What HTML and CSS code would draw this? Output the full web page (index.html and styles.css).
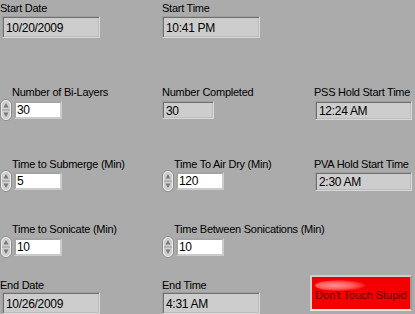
FILE: index.html
```html
<!DOCTYPE html>
<html>
<head>
<meta charset="utf-8">
<link rel="stylesheet" href="styles.css">
</head>
<body>
<div class="panel">
  <div class="row r1">
    <div class="cell c1">
      <div class="label">Start Date</div>
      <div class="ind wide">10/20/2009</div>
    </div>
    <div class="cell c2">
      <div class="label">Start Time</div>
      <div class="ind wide">10:41 PM</div>
    </div>
    <div class="cell c3"></div>
  </div>

  <div class="row r2">
    <div class="cell c1">
      <div class="label indent">Number of Bi-Layers</div>
      <div class="num">
        <svg class="spin" viewBox="0 0 12 22" width="12" height="22"><rect x="0.5" y="0.5" width="11" height="21" rx="5.5" fill="#cfcfcf" stroke="#8c8c8c"/><rect x="1.5" y="1.5" width="9" height="19" rx="4.5" fill="none" stroke="#ececec"/><line x1="2" y1="11" x2="10" y2="11" stroke="#9a9a9a"/><path d="M6 4 L8.5 8.5 L3.5 8.5 Z" fill="#7a7a7a"/><path d="M6 18 L8.5 13.5 L3.5 13.5 Z" fill="#7a7a7a"/></svg>
        <div class="ctl">30</div>
      </div>
    </div>
    <div class="cell c2">
      <div class="label">Number Completed</div>
      <div class="ind small">30</div>
    </div>
    <div class="cell c3">
      <div class="label lab3">PSS Hold Start Time</div>
      <div class="ind right">12:24 AM</div>
    </div>
  </div>

  <div class="row r3">
    <div class="cell c1">
      <div class="label indent">Time to Submerge (Min)</div>
      <div class="num">
        <svg class="spin" viewBox="0 0 12 22" width="12" height="22"><rect x="0.5" y="0.5" width="11" height="21" rx="5.5" fill="#cfcfcf" stroke="#8c8c8c"/><rect x="1.5" y="1.5" width="9" height="19" rx="4.5" fill="none" stroke="#ececec"/><line x1="2" y1="11" x2="10" y2="11" stroke="#9a9a9a"/><path d="M6 4 L8.5 8.5 L3.5 8.5 Z" fill="#7a7a7a"/><path d="M6 18 L8.5 13.5 L3.5 13.5 Z" fill="#7a7a7a"/></svg>
        <div class="ctl">5</div>
      </div>
    </div>
    <div class="cell c2">
      <div class="label indent">Time To Air Dry (Min)</div>
      <div class="num">
        <svg class="spin" viewBox="0 0 12 22" width="12" height="22"><rect x="0.5" y="0.5" width="11" height="21" rx="5.5" fill="#cfcfcf" stroke="#8c8c8c"/><rect x="1.5" y="1.5" width="9" height="19" rx="4.5" fill="none" stroke="#ececec"/><line x1="2" y1="11" x2="10" y2="11" stroke="#9a9a9a"/><path d="M6 4 L8.5 8.5 L3.5 8.5 Z" fill="#7a7a7a"/><path d="M6 18 L8.5 13.5 L3.5 13.5 Z" fill="#7a7a7a"/></svg>
        <div class="ctl">120</div>
      </div>
    </div>
    <div class="cell c3">
      <div class="label lab3">PVA Hold Start Time</div>
      <div class="ind right">2:30 AM</div>
    </div>
  </div>

  <div class="row r4">
    <div class="cell c1">
      <div class="label indent">Time to Sonicate (Min)</div>
      <div class="num">
        <svg class="spin" viewBox="0 0 12 22" width="12" height="22"><rect x="0.5" y="0.5" width="11" height="21" rx="5.5" fill="#cfcfcf" stroke="#8c8c8c"/><rect x="1.5" y="1.5" width="9" height="19" rx="4.5" fill="none" stroke="#ececec"/><line x1="2" y1="11" x2="10" y2="11" stroke="#9a9a9a"/><path d="M6 4 L8.5 8.5 L3.5 8.5 Z" fill="#7a7a7a"/><path d="M6 18 L8.5 13.5 L3.5 13.5 Z" fill="#7a7a7a"/></svg>
        <div class="ctl">10</div>
      </div>
    </div>
    <div class="cell c2">
      <div class="label indent">Time Between Sonications (Min)</div>
      <div class="num">
        <svg class="spin" viewBox="0 0 12 22" width="12" height="22"><rect x="0.5" y="0.5" width="11" height="21" rx="5.5" fill="#cfcfcf" stroke="#8c8c8c"/><rect x="1.5" y="1.5" width="9" height="19" rx="4.5" fill="none" stroke="#ececec"/><line x1="2" y1="11" x2="10" y2="11" stroke="#9a9a9a"/><path d="M6 4 L8.5 8.5 L3.5 8.5 Z" fill="#7a7a7a"/><path d="M6 18 L8.5 13.5 L3.5 13.5 Z" fill="#7a7a7a"/></svg>
        <div class="ctl">10</div>
      </div>
    </div>
    <div class="cell c3"></div>
  </div>

  <div class="row r5">
    <div class="cell c1">
      <div class="label">End Date</div>
      <div class="ind wide">10/26/2009</div>
    </div>
    <div class="cell c2">
      <div class="label">End Time</div>
      <div class="ind wide">4:31 AM</div>
    </div>
    <div class="cell c3">
      <div class="btn"><span class="shine"></span><span class="btn-text">Don't Touch Stupid</span></div>
    </div>
  </div>
</div>
</body>
</html>
```

FILE: styles.css
```css
html, body {
  margin: 0;
  padding: 0;
  background: #ababab;
  width: 415px;
  height: 314px;
  overflow: hidden;
}
.panel {
  display: flex;
  flex-direction: column;
  padding-top: 2px;
  font-family: "Liberation Sans", Arial, sans-serif;
  color: #000;
}
.row {
  display: flex;
}
.r1 { height: 84px; }
.r2 { height: 72px; }
.r3 { height: 65px; }
.r4 { height: 56px; }
.r5 { height: 40px; }
.cell {
  display: flex;
  flex-direction: column;
  align-items: flex-start;
}
.c1 { width: 162px; }
.c2 { width: 148px; }
.c3 { width: 105px; }
.label {
  font-size: 11px;
  line-height: 13px;
  height: 13px;
  letter-spacing: -0.25px;
  white-space: nowrap;
  margin-bottom: 1px;
}
.indent { padding-left: 12px; }
.lab3 { padding-left: 4px; }
.r2 .label { margin-bottom: 2px; }
.r4 .label { margin-bottom: 2px; }
.r5 .label { margin-bottom: 0; }

.ind {
  box-sizing: border-box;
  background: #cdcdcd;
  border: 1px solid;
  border-color: #9e9e9e #d8d8d8 #d8d8d8 #9e9e9e;
  box-shadow: inset 1px 1px 0 #6f6f6f, inset -1px -1px 0 #bdbdbd;
  font-size: 12px;
  line-height: 14px;
  letter-spacing: -0.3px;
  padding: 3px 4px 0 3px;
  white-space: nowrap;
}
.ind.wide {
  width: 98px;
  height: 22px;
  margin-left: 2px;
  padding-top: 4px;
}
.c2 .ind.wide { margin-left: 0; }
.ind.small {
  width: 52px;
  height: 18px;
  padding-top: 2px;
}
.ind.right {
  width: 97px;
  height: 19px;
  margin-left: 5px;
  padding-top: 2px;
}
.num {
  display: flex;
  align-items: center;
  margin-top: -2px;
}
.spin {
  display: block;
  flex: none;
}
.ctl {
  box-sizing: border-box;
  width: 48px;
  height: 18px;
  margin-left: 2px;
  background: #fff;
  border: 2px solid;
  border-color: #a4a4a4 #cbcbcb #cbcbcb #a4a4a4;
  font-size: 12px;
  line-height: 14px;
  letter-spacing: -0.3px;
  padding: 0 0 0 1px;
}
.btn {
  position: relative;
  box-sizing: border-box;
  width: 102px;
  height: 36px;
  margin-top: -4px;
  background: #f40000;
  border: 2px solid;
  border-color: #cfcfcf #9a9a9a #e8e8e8 #cfcfcf;
  display: flex;
  align-items: center;
  justify-content: center;
  overflow: hidden;
}
.shine {
  position: absolute;
  left: 3px;
  top: 3px;
  width: 50px;
  height: 11px;
  border-radius: 50%;
  background: radial-gradient(ellipse at 40% 50%, #ff9090 0%, #ff5a5a 45%, rgba(255,0,0,0) 78%);
}
.btn-text {
  position: relative;
  font-size: 11px;
  color: #5a0000;
  white-space: nowrap;
  margin-top: 4px;
}
```
